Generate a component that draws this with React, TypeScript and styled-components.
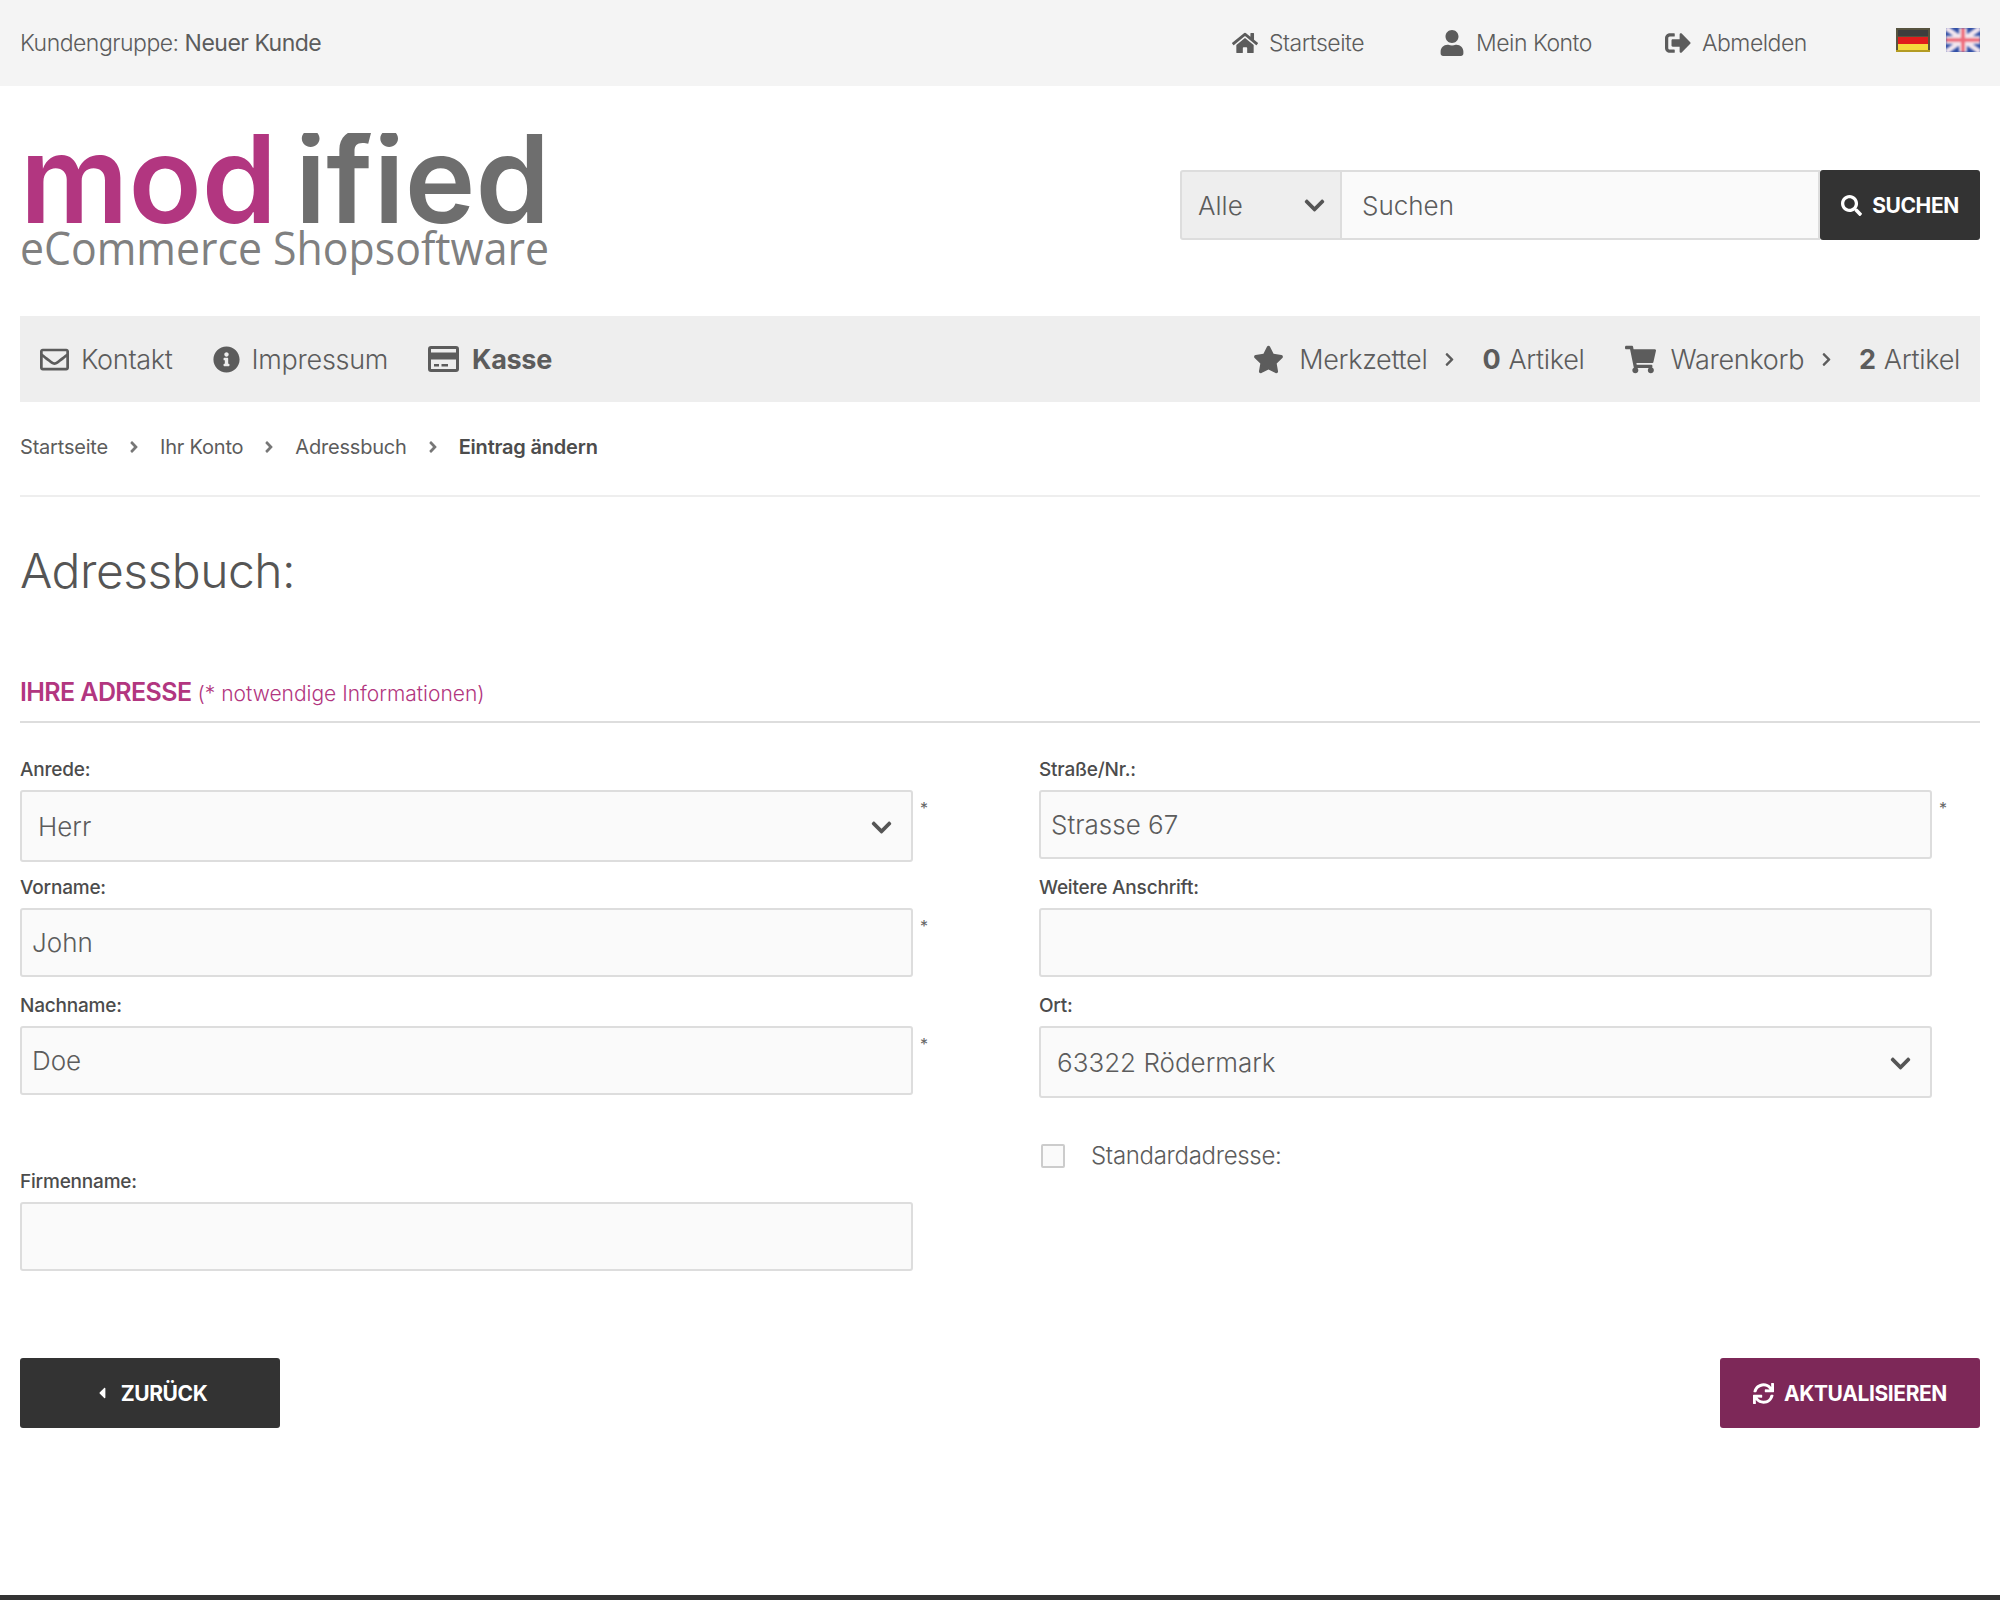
import React from 'react';
import styled, { createGlobalStyle } from 'styled-components';
import {
  FaAngleRight,
  FaCaretLeft,
  FaChevronDown,
  FaChevronRight,
  FaHome,
  FaInfoCircle,
  FaRegEnvelope,
  FaSearch,
  FaShoppingCart,
  FaSignOutAlt,
  FaStar,
  FaSync,
  FaUser,
} from 'react-icons/fa';

const GlobalStyle = createGlobalStyle`
  html, body {
    margin: 0;
    padding: 0;
    background: #fff;
    font-family: Inter, "Liberation Sans", sans-serif;
    color: #5c5c5c;
  }
  * { box-sizing: border-box; }
`;

const Page = styled.div`
  width: 2000px;
  height: 1600px;
  display: flex;
  flex-direction: column;
`;

const TopBar = styled.div`
  height: 86px;
  background: #f4f4f4;
  display: flex;
  align-items: center;
  justify-content: space-between;
  padding: 0 20px;
  font-size: 23px;
  font-weight: 300;
  letter-spacing: -0.5px;
`;

const TopLinks = styled.div`
  display: flex;
  align-items: center;
`;

const TopLink = styled.span<{ $width: number }>`
  display: flex;
  align-items: center;
  width: ${({ $width }) => $width}px;
  gap: 11px;
  svg { font-size: 26px; flex: none; }
`;

const Flags = styled.div`
  display: flex;
  gap: 16px;
  margin-bottom: 6px;
`;

const Header = styled.header`
  height: 230px;
  padding: 47px 20px 0;
  display: flex;
  justify-content: space-between;
`;

const SearchForm = styled.div`
  margin-top: 37px;
  height: 70px;
  display: flex;
`;

const SearchCategory = styled.div`
  width: 162px;
  height: 70px;
  background: #eee;
  border: 2px solid #ddd;
  border-radius: 3px 0 0 3px;
  padding: 0 14px 0 16px;
  display: flex;
  align-items: center;
  justify-content: space-between;
  font-size: 26px;
  font-weight: 300;
  svg { font-size: 23px; color: #555; }
`;

const SearchInput = styled.input`
  width: 478px;
  height: 70px;
  background: #fafafa;
  border: 2px solid #ddd;
  border-left: 0;
  padding: 0 20px;
  font: 300 26px Inter, sans-serif;
  color: #5c5c5c;
  outline: none;
  &::placeholder { color: #5c5c5c; opacity: 1; }
`;

const DarkButton = styled.button<{ $bg?: string; $width: number }>`
  width: ${({ $width }) => $width}px;
  height: 70px;
  background: ${({ $bg }) => $bg || '#333'};
  color: #fff;
  border: 0;
  border-radius: 3px;
  display: flex;
  align-items: center;
  justify-content: center;
  gap: 10px;
  font: 700 21px Inter, sans-serif;
  letter-spacing: -0.4px;
  text-transform: uppercase;
  padding: 0;
`;

const NavBar = styled.nav`
  height: 86px;
  margin: 0 20px;
  background: #eee;
  display: flex;
  align-items: center;
  justify-content: space-between;
  padding: 0 20px;
  font-size: 27px;
  font-weight: 300;
  letter-spacing: -0.3px;
`;

const NavGroup = styled.div`
  display: flex;
  align-items: center;
`;

const NavItem = styled.span<{ $gap?: number; $ml?: number }>`
  display: flex;
  align-items: center;
  gap: ${({ $gap }) => $gap ?? 12}px;
  margin-left: ${({ $ml }) => $ml ?? 0}px;
  white-space: nowrap;
  b { font-weight: 700; }
  svg { flex: none; }
`;

const Breadcrumb = styled.div`
  height: 95px;
  margin: 0 20px;
  border-bottom: 2px solid #eee;
  display: flex;
  align-items: center;
  padding-bottom: 3px;
  font-size: 20px;
  font-weight: 400;
  letter-spacing: -0.2px;
  b { font-weight: 600; color: #4c4c4c; }
  svg { color: #777; margin: 0 17px; font-size: 18px; }
`;

const Title = styled.h1`
  margin: 0;
  padding: 44px 20px 0;
  height: 149px;
  font-size: 48px;
  font-weight: 300;
  line-height: 60px;
  letter-spacing: -0.5px;
  color: #555;
`;

const SectionHead = styled.div`
  margin: 0 20px;
  height: 77px;
  padding-top: 26px;
  border-bottom: 2px solid #ddd;
  color: #b23680;
  font-size: 21px;
  font-weight: 300;
  line-height: 40px;
  display: flex;
  align-items: baseline;
  gap: 6px;
  b { font-size: 25px; font-weight: 600; letter-spacing: -0.6px; }
`;

const FormGrid = styled.div`
  display: grid;
  grid-template-columns: 1019px 941px;
  margin: 37px 20px 0;
  height: 610px;
`;

const Column = styled.div`
  display: flex;
  flex-direction: column;
`;

const Field = styled.div<{ $mt?: number }>`
  height: 118px;
  margin-top: ${({ $mt }) => $mt ?? 0}px;
`;

const Label = styled.label`
  display: block;
  height: 20px;
  line-height: 20px;
  margin-bottom: 10px;
  font-size: 19px;
  font-weight: 500;
  letter-spacing: -0.2px;
  color: #4c4c4c;
`;

const ControlRow = styled.div`
  display: flex;
  align-items: flex-start;
  position: relative;
`;

const TextInput = styled.input`
  width: 893px;
  height: 69px;
  background: #fafafa;
  border: 2px solid #ddd;
  border-radius: 3px;
  padding: 0 10px;
  font: 300 26px Inter, sans-serif;
  color: #5c5c5c;
  outline: none;
`;

const SelectBox = styled.div`
  width: 893px;
  height: 72px;
  position: relative;
  svg {
    position: absolute;
    right: 20px;
    top: 26px;
    font-size: 23px;
    color: #555;
    pointer-events: none;
  }
`;

const NativeSelect = styled.select<{ $pad: number }>`
  appearance: none;
  width: 100%;
  height: 100%;
  background: #fafafa;
  border: 2px solid #ddd;
  border-radius: 3px;
  padding: 0 0 0 ${({ $pad }) => $pad}px;
  font: 300 26px Inter, sans-serif;
  color: #5c5c5c;
  outline: none;
`;

const Required = styled.span`
  margin-left: 7px;
  margin-top: 8px;
  font-size: 16px;
  line-height: 20px;
  color: #666;
`;

const CheckRow = styled.div`
  display: flex;
  align-items: center;
  gap: 26px;
  margin: 27px 0 0 2px;
  font-size: 24px;
  font-weight: 300;
  letter-spacing: -0.3px;
`;

const CheckBox = styled.input`
  appearance: none;
  width: 24px;
  height: 24px;
  margin: 0;
  background: #fafafa;
  border: 2px solid #ccc;
  border-radius: 2px;
`;

const Actions = styled.div`
  display: flex;
  justify-content: space-between;
  padding: 0 20px;
  margin-top: -12px;
`;

const Spacer = styled.div`
  flex: 1;
`;

const Footer = styled.footer`
  height: 5px;
  background: #333;
`;

const Logo = () => (
  <svg width="530" height="142" viewBox="0 0 530 142">
    <text x="0" y="90" fontFamily="Inter, sans-serif" fontWeight="600" fontSize="122" fill="#b23680" textLength="257" lengthAdjust="spacingAndGlyphs">mod</text>
    <text x="275" y="90" fontFamily="Inter, sans-serif" fontWeight="600" fontSize="122" fill="#6e6e6e" textLength="255" lengthAdjust="spacingAndGlyphs">ified</text>
    <text x="0" y="132" fontFamily="'Open Sans', sans-serif" fontSize="46" fill="#808080" textLength="529" lengthAdjust="spacingAndGlyphs">eCommerce Shopsoftware</text>
  </svg>
);

const FlagDe = () => (
  <svg width="34" height="24" viewBox="0 0 34 24">
    <defs>
      <filter id="soft"><feGaussianBlur stdDeviation="0.7" /></filter>
    </defs>
    <rect width="34" height="24" fill="#57533f" />
    <g filter="url(#soft)">
      <rect x="2" y="2" width="30" height="6" fill="#3d3d3d" />
      <rect x="2" y="9" width="30" height="7" fill="#e01c1c" />
      <rect x="2" y="16" width="30" height="6" fill="#f5d93e" />
    </g>
    <rect y="22" width="34" height="2" fill="#b39b22" />
  </svg>
);

const FlagEn = () => (
  <svg width="34" height="24" viewBox="0 0 34 24">
    <defs>
      <filter id="soft2"><feGaussianBlur stdDeviation="0.8" /></filter>
    </defs>
    <rect width="34" height="24" fill="#2f4ea6" />
    <g filter="url(#soft2)">
      <path d="M0 0L34 24M34 0L0 24" stroke="#f3e6ee" strokeWidth="5" />
      <path d="M17 0V24M0 12H34" stroke="#f3e6ee" strokeWidth="8" />
      <path d="M17 0V24M0 12H34" stroke="#ee6a7a" strokeWidth="4" />
    </g>
  </svg>
);

const CardIcon = () => (
  <svg width="31" height="26" viewBox="0 0 31 26" fill="#5c5c5c">
    <path d="M3 0h25a3 3 0 0 1 3 3v20a3 3 0 0 1-3 3H3a3 3 0 0 1-3-3V3a3 3 0 0 1 3-3zm0 6.5h25V3H3zm0 7V23h25v-9.500zM6 18h5v2.500H6zm7.500 0H20v2.500h-6.500z" fillRule="evenodd" />
  </svg>
);

const App: React.FC = () => (
  <Page>
    <GlobalStyle />
    <TopBar>
      <span>Kundengruppe: <b>Neuer Kunde</b></span>
      <TopLinks>
        <TopLink $width={207}><FaHome />Startseite</TopLink>
        <TopLink $width={226}><FaUser />Mein Konto</TopLink>
        <TopLink $width={231}><FaSignOutAlt />Abmelden</TopLink>
        <Flags><FlagDe /><FlagEn /></Flags>
      </TopLinks>
    </TopBar>

    <Header>
      <Logo />
      <SearchForm>
        <SearchCategory>Alle<FaChevronDown /></SearchCategory>
        <SearchInput placeholder="Suchen" />
        <DarkButton $width={160}><FaSearch />Suchen</DarkButton>
      </SearchForm>
    </Header>

    <NavBar>
      <NavGroup>
        <NavItem><FaRegEnvelope size={29} />Kontakt</NavItem>
        <NavItem $ml={40}><FaInfoCircle size={27} />Impressum</NavItem>
        <NavItem $ml={40} $gap={13}><CardIcon /><b>Kasse</b></NavItem>
      </NavGroup>
      <NavGroup>
        <NavItem $gap={15}><FaStar size={31} />Merkzettel<FaChevronRight size={15} /></NavItem>
        <NavItem $ml={25} $gap={8}><b>0</b>Artikel</NavItem>
        <NavItem $ml={40} $gap={15}><FaShoppingCart size={31} />Warenkorb<FaChevronRight size={15} /></NavItem>
        <NavItem $ml={25} $gap={8}><b>2</b>Artikel</NavItem>
      </NavGroup>
    </NavBar>

    <Breadcrumb>
      Startseite<FaAngleRight />Ihr Konto<FaAngleRight />Adressbuch<FaAngleRight /><b>Eintrag ändern</b>
    </Breadcrumb>

    <Title>Adressbuch:</Title>

    <SectionHead><b>IHRE ADRESSE</b>(* notwendige Informationen)</SectionHead>

    <FormGrid>
      <Column>
        <Field>
          <Label>Anrede:</Label>
          <ControlRow>
            <SelectBox>
              <NativeSelect $pad={16} defaultValue="Herr"><option>Herr</option><option>Frau</option></NativeSelect>
              <FaChevronDown />
            </SelectBox>
            <Required>*</Required>
          </ControlRow>
        </Field>
        <Field>
          <Label>Vorname:</Label>
          <ControlRow><TextInput defaultValue="John" /><Required>*</Required></ControlRow>
        </Field>
        <Field>
          <Label>Nachname:</Label>
          <ControlRow><TextInput defaultValue="Doe" /><Required>*</Required></ControlRow>
        </Field>
        <Field $mt={58}>
          <Label>Firmenname:</Label>
          <ControlRow><TextInput /></ControlRow>
        </Field>
      </Column>
      <Column>
        <Field>
          <Label>Straße/Nr.:</Label>
          <ControlRow><TextInput defaultValue="Strasse 67" /><Required>*</Required></ControlRow>
        </Field>
        <Field>
          <Label>Weitere Anschrift:</Label>
          <ControlRow><TextInput /></ControlRow>
        </Field>
        <Field>
          <Label>Ort:</Label>
          <ControlRow>
            <SelectBox>
              <NativeSelect $pad={16} defaultValue="63322 Rödermark"><option>63322 Rödermark</option></NativeSelect>
              <FaChevronDown />
            </SelectBox>
          </ControlRow>
        </Field>
        <CheckRow><CheckBox type="checkbox" />Standardadresse:</CheckRow>
      </Column>
    </FormGrid>

    <Actions>
      <DarkButton $width={260}><FaCaretLeft size={18} />Zurück</DarkButton>
      <DarkButton $width={260} $bg="#7d2858"><FaSync size={21} />Aktualisieren</DarkButton>
    </Actions>
    <Spacer />
    <Footer />
  </Page>
);

export default App;
